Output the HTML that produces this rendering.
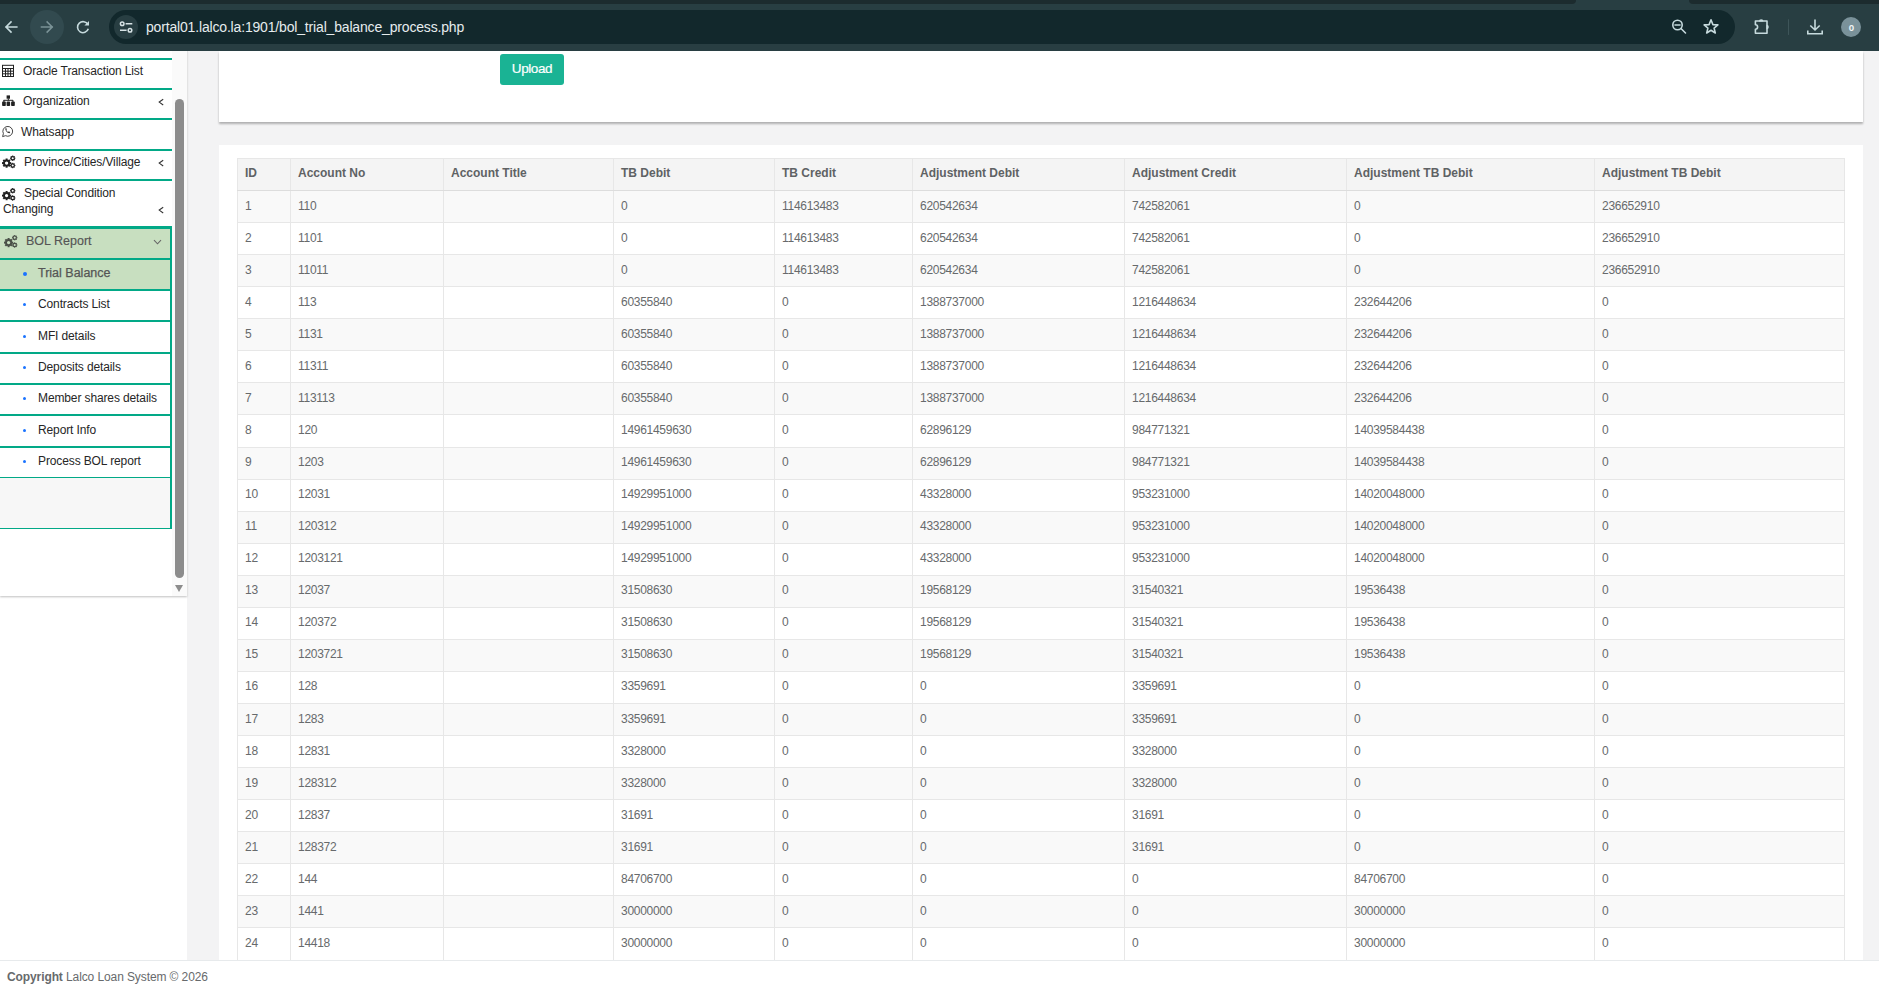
<!DOCTYPE html>
<html><head><meta charset="utf-8">
<style>
*{box-sizing:border-box;margin:0;padding:0}
html,body{width:1879px;height:991px;overflow:hidden;background:#f3f3f4;font-family:"Liberation Sans",sans-serif;font-size:12px;color:#676a6c}
.abs{position:absolute}
/* chrome */
#chrome{position:absolute;left:0;top:0;width:1879px;height:51px;background:#283e42}
#strip1{position:absolute;left:0;top:0;width:1576px;height:4px;background:#1c2b2e;border-radius:0 0 4px 0}
#strip2{position:absolute;left:1689px;top:0;width:190px;height:4px;background:#1c2b2e;border-radius:0 0 0 4px}
#fwdc{position:absolute;left:30px;top:10px;width:34px;height:34px;border-radius:50%;background:#324a4f}
#url{position:absolute;left:109px;top:10px;width:1626px;height:34px;border-radius:17px;background:#12282c}
#tunec{position:absolute;left:114px;top:15px;width:24px;height:24px;border-radius:50%;background:#283e42}
#urltext{position:absolute;left:146px;top:17px;font-size:14px;letter-spacing:-0.17px;color:#e6ecee;white-space:nowrap;line-height:20px}
#avatar{position:absolute;left:1841px;top:17px;width:20px;height:20px;border-radius:50%;background:#7a929a;color:#f2f6f7;font-size:11px;font-weight:bold;text-align:center;line-height:20px}
#sep{position:absolute;left:1787.5px;top:19px;width:1.5px;height:16px;background:#3e5559;border-radius:1px}
/* sidebar */
#side{position:absolute;left:0;top:51px;width:187px;height:909px;background:#fff}
#sidepanel{position:absolute;left:0;top:51px;width:187px;height:545px;background:#fff;box-shadow:0 1px 2px rgba(0,0,0,.25)}
#track{position:absolute;left:172px;top:51px;width:16px;height:545px;background:#fafafa;border-right:1px solid #e3e3e3}
#thumb{position:absolute;left:175px;top:99px;width:9px;height:479px;background:#8c8c8c;border-radius:4.5px}
#arrdn{position:absolute;left:175px;top:585px;width:0;height:0;border-left:4.5px solid transparent;border-right:4.5px solid transparent;border-top:7px solid #8c8c8c}
.si{position:absolute;left:0;width:172px;color:#262626;font-size:12px;letter-spacing:-0.12px;white-space:nowrap}
.tl{position:absolute;height:2px;background:#02a987;left:0;width:172px}
.sub{position:absolute;left:38px;color:#262626;font-size:12px;letter-spacing:-0.12px;white-space:nowrap}
.dot{position:absolute;left:23px;width:4px;height:4px;border-radius:50%;background:#1a73ff}
.chev{position:absolute;left:157px;font-size:12px;color:#333}
/* panels */
#box1{position:absolute;left:219px;top:51px;width:1644px;height:71px;background:#fff;box-shadow:0 2px 2px rgba(0,0,0,.28)}
#btn{position:absolute;left:500px;top:54px;width:64px;height:31px;background:#1ab394;border-radius:3px;color:#fff;font-size:13.5px;text-align:center;line-height:29.5px;letter-spacing:-0.4px;-webkit-text-stroke:0.2px #fff}
#box2{position:absolute;left:219px;top:145px;width:1644px;height:815px;background:#fff}
/* table */
#tbl{position:absolute;left:237px;top:158px;border-collapse:collapse;table-layout:fixed;width:1607px}
#tbl th,#tbl td{border:1px solid #e7e7e7;text-align:left;padding:0 7px 2px;height:32.07px;white-space:nowrap;overflow:hidden}
#tbl th{background:#f4f4f4;font-weight:bold;color:#5f6264;border-bottom:1px solid #dddddd;height:32px;padding-bottom:3px}
#tbl td{letter-spacing:-0.28px}
#tbl tr:nth-child(even) td{background:#f9f9f9}
#tbl tr:nth-child(odd) td{background:#fff}
#footer{position:absolute;left:0;top:960px;width:1879px;height:31px;background:#fff;border-top:1px solid #e7eaec;padding:0 7px;line-height:20px;padding-top:6px;font-size:12px;color:#676a6c;letter-spacing:-0.1px}
</style></head><body>
<div id="chrome">
<div id="strip1"></div><div id="strip2"></div>
<svg class="abs" style="left:0;top:0" width="110" height="51">
 <g fill="none" stroke="#c6dadd" stroke-width="1.6" stroke-linecap="square">
  <path d="M6 27 H16.8 M11 22 L6 27 L11 32"/>
 </g>
</svg>
<div id="fwdc"></div>
<svg class="abs" style="left:0;top:0" width="110" height="51">
 <g fill="none" stroke="#7b9397" stroke-width="1.6" stroke-linecap="square">
  <path d="M41.5 27 H52.2 M47.2 22 L52.2 27 L47.2 32"/>
 </g>
 <g fill="none" stroke="#c6dadd" stroke-width="1.6">
  <path d="M87.9 24.6 A5.5 5.5 0 1 0 88.3 28.8"/>
 </g>
 <path d="M89 21 V25.6 H84.4 Z" fill="#c6dadd"/>
</svg>
<div id="url"></div>
<div id="tunec"></div>
<svg class="abs" style="left:0;top:0" width="150" height="51">
 <g fill="none" stroke="#d6e2e4" stroke-width="1.5">
  <circle cx="122.2" cy="23.7" r="1.8"/>
  <circle cx="130" cy="30.2" r="1.8"/>
  <path d="M125.6 23.7 H132.3 M120 30.2 H126.6"/>
 </g>
</svg>
<div id="urltext">portal01.lalco.la:1901/bol_trial_balance_process.php</div>
<svg class="abs" style="left:1660px;top:0" width="219" height="51">
 <g fill="none" stroke="#c6dadd" stroke-width="1.6">
  <circle cx="17.5" cy="25" r="4.7"/>
  <path d="M15 25 H20 M21 28.5 L25.5 33" stroke-linecap="round"/>
  <path d="M51 19.8 L52.9 24.6 L57.9 24.9 L54.1 28.1 L55.3 33 L51 30.3 L46.7 33 L47.9 28.1 L44.1 24.9 L49.1 24.6 Z" stroke-linejoin="round"/>
  <path d="M95.4 21 H107 V33.3 H95.4 V29.2 A2.2 2.2 0 0 0 95.4 24.8 Z" stroke-linejoin="round"/>
  <path d="M155 19.5 V30 M150.3 25.5 L155 30 L159.7 25.5 M147.8 30.5 V33.8 H162.2 V30.5"/>
 </g>
 <g fill="#c6dadd"><path d="M98.9 21.5 A2.3 2.3 0 0 1 103.5 21.5 Z"/><path d="M106.5 24.7 A2.3 2.3 0 0 1 106.5 29.3 Z"/></g>
</svg>
<div id="sep"></div>
<div id="avatar"><span style="display:inline-block;transform:scaleX(0.8)">o</span></div>
</div>
<div id="side"></div>
<div id="sidepanel"></div>
<!-- borders -->
<div class="tl" style="top:58px"></div>
<div class="tl" style="top:88px"></div>
<div class="tl" style="top:118px"></div>
<div class="tl" style="top:149px"></div>
<div class="tl" style="top:179px"></div>
<!-- BOL report block -->
<div class="abs" style="left:0;top:226px;width:172px;height:64px;background:#c8dfc0"></div>
<div class="tl" style="top:226px;height:3px"></div>
<div class="tl" style="top:258px"></div>
<div class="tl" style="top:289px"></div>
<div class="tl" style="top:320px"></div>
<div class="tl" style="top:352px"></div>
<div class="tl" style="top:383px"></div>
<div class="tl" style="top:414px"></div>
<div class="tl" style="top:446px"></div>
<div class="tl" style="top:477px;height:1px"></div>
<div class="abs" style="left:0;top:478px;width:170px;height:50px;background:#f7f7f7"></div>
<div class="tl" style="top:527.5px;height:1.5px"></div>
<div class="abs" style="left:170px;top:226px;width:2px;height:303px;background:#02a987"></div>
<!-- items -->
<svg class="abs" style="left:0;top:51px" width="30" height="250">
 <!-- calculator/table icon -->
 <g fill="none" stroke="#222" stroke-width="1">
  <rect x="2.5" y="14.3" width="11" height="11.2"/>
  <path d="M2.5 17.5 H13.5 M2.5 20.2 H13.5 M2.5 22.8 H13.5 M5.5 17.5 V25.5 M8 17.5 V25.5 M10.6 17.5 V25.5"/>
 </g>
 <!-- sitemap icon -->
 <g fill="#222">
  <rect x="6.6" y="44.4" width="3.4" height="3.3"/>
  <rect x="7.8" y="47.5" width="1" height="2"/>
  <rect x="3.6" y="48.8" width="9.4" height="1"/>
  <rect x="2.1" y="50.6" width="3.7" height="4.5" rx="0.8"/><rect x="6.6" y="50.6" width="3.5" height="4.5" rx="0.8"/><rect x="11.1" y="50.6" width="3.7" height="4.5" rx="0.8"/>
  <rect x="3.4" y="49" width="1" height="2"/><rect x="12.4" y="49" width="1" height="2"/>
 </g>
 <!-- whatsapp -->
 <g fill="none" stroke="#333" stroke-width="0.9">
  <path d="M2.6 85.6 L3.4 82.6 A4.9 4.9 0 1 1 5.5 84.7 Z"/>
  <path d="M5.3 77.4 C5.1 79.2 6.9 81.8 9.5 82.3 L10.2 81.2 L8.9 80.3 L8.1 80.9 C7.2 80.5 6.6 79.8 6.3 78.9 L6.9 78.2 L6.1 76.9 Z" fill="#333" stroke="none"/>
 </g>
</svg>
<div class="si" style="left:23px;top:57px;line-height:28px">Oracle Transaction List</div>
<div class="si" style="left:23px;top:87px;line-height:28px">Organization</div>
<div class="si" style="left:21px;top:118px;line-height:29px">Whatsapp</div>
<div class="si" style="left:24px;top:148px;line-height:28px">Province/Cities/Village</div>
<div class="si" style="left:24px;top:185px;line-height:16px">Special Condition</div>
<div class="si" style="left:3px;top:201px;line-height:16px">Changing</div>
<div class="si" style="left:26px;top:227.3px;line-height:29px;color:#555;font-size:12.5px;letter-spacing:0px;-webkit-text-stroke:0.15px #555">BOL Report</div>
<svg class="abs" style="left:0;top:0" width="172" height="260" fill="none" stroke="#333" stroke-width="1.1"><path d="M163.2 99.2 L159.2 102.1 L163.2 105"/><path d="M163.2 160.2 L159.2 163.1 L163.2 166"/><path d="M163.2 207.2 L159.2 210.1 L163.2 213"/><path d="M154 240.2 L157.5 243.8 L161 240.2" stroke="#666"/></svg>
<div class="dot" style="top:272px"></div><div class="sub" style="top:259px;line-height:29px;color:#555;font-size:12.5px;letter-spacing:0px;-webkit-text-stroke:0.25px #555">Trial Balance</div>
<div class="dot" style="top:303px;width:3px;height:3px"></div><div class="sub" style="top:290px;line-height:29px">Contracts List</div>
<div class="dot" style="top:335px;width:3px;height:3px"></div><div class="sub" style="top:321px;line-height:30px">MFI details</div>
<div class="dot" style="top:366px;width:3px;height:3px"></div><div class="sub" style="top:353px;line-height:29px">Deposits details</div>
<div class="dot" style="top:397px;width:3px;height:3px"></div><div class="sub" style="top:384px;line-height:29px">Member shares details</div>
<div class="dot" style="top:429px;width:3px;height:3px"></div><div class="sub" style="top:415px;line-height:30px">Report Info</div>
<div class="dot" style="top:460px;width:3px;height:3px"></div><div class="sub" style="top:447px;line-height:29px">Process BOL report</div>
<div id="track"></div>
<div id="thumb"></div>
<div id="arrdn"></div>
<svg class="abs" style="left:0;top:0" width="30" height="260">
 <defs>
  <g id="cogs">
   <g transform="translate(4.6,7.6)">
    <circle r="2.6" fill="none" stroke="#222" stroke-width="1.9"/>
    <g fill="#222">
     <rect x="-1" y="-4.6" width="2" height="2.2"/><rect x="-1" y="2.4" width="2" height="2.2"/>
     <rect x="-4.6" y="-1" width="2.2" height="2"/><rect x="2.4" y="-1" width="2.2" height="2"/>
     <g transform="rotate(45)"><rect x="-1" y="-4.6" width="2" height="2.2"/><rect x="-1" y="2.4" width="2" height="2.2"/><rect x="-4.6" y="-1" width="2.2" height="2"/><rect x="2.4" y="-1" width="2.2" height="2"/></g>
    </g>
   </g>
   <g transform="translate(10.7,2.7)">
    <circle r="1.65" fill="none" stroke="#222" stroke-width="1.15"/>
    <g fill="#222"><rect x="-0.55" y="-2.7" width="1.1" height="1.2"/><rect x="-0.55" y="1.5" width="1.1" height="1.2"/><rect x="-2.7" y="-0.55" width="1.2" height="1.1"/><rect x="1.5" y="-0.55" width="1.2" height="1.1"/><g transform="rotate(45)"><rect x="-0.55" y="-2.7" width="1.1" height="1.2"/><rect x="-0.55" y="1.5" width="1.1" height="1.2"/><rect x="-2.7" y="-0.55" width="1.2" height="1.1"/><rect x="1.5" y="-0.55" width="1.2" height="1.1"/></g></g>
   </g>
   <g transform="translate(10.7,10)">
    <circle r="1.65" fill="none" stroke="#222" stroke-width="1.15"/>
    <g fill="#222"><rect x="-0.55" y="-2.7" width="1.1" height="1.2"/><rect x="-0.55" y="1.5" width="1.1" height="1.2"/><rect x="-2.7" y="-0.55" width="1.2" height="1.1"/><rect x="1.5" y="-0.55" width="1.2" height="1.1"/><g transform="rotate(45)"><rect x="-0.55" y="-2.7" width="1.1" height="1.2"/><rect x="-0.55" y="1.5" width="1.1" height="1.2"/><rect x="-2.7" y="-0.55" width="1.2" height="1.1"/><rect x="1.5" y="-0.55" width="1.2" height="1.1"/></g></g>
   </g>
  </g>
 </defs>
 <use href="#cogs" x="2" y="155.5"/>
 <use href="#cogs" x="2" y="188"/>
 <use href="#cogs" x="4" y="235" style="opacity:.75"/>
</svg>
<div id="box1"></div><div id="btn">Upload</div><div id="box2"></div>
<table id="tbl"><colgroup><col style="width:53px"><col style="width:153px"><col style="width:170px"><col style="width:161px"><col style="width:138px"><col style="width:212px"><col style="width:222px"><col style="width:248px"><col style="width:250px"></colgroup>
<tr><th>ID</th><th>Account No</th><th>Account Title</th><th>TB Debit</th><th>TB Credit</th><th>Adjustment Debit</th><th>Adjustment Credit</th><th>Adjustment TB Debit</th><th>Adjustment TB Debit</th></tr>
<tr><td>1</td><td>110</td><td></td><td>0</td><td>114613483</td><td>620542634</td><td>742582061</td><td>0</td><td>236652910</td></tr>
<tr><td>2</td><td>1101</td><td></td><td>0</td><td>114613483</td><td>620542634</td><td>742582061</td><td>0</td><td>236652910</td></tr>
<tr><td>3</td><td>11011</td><td></td><td>0</td><td>114613483</td><td>620542634</td><td>742582061</td><td>0</td><td>236652910</td></tr>
<tr><td>4</td><td>113</td><td></td><td>60355840</td><td>0</td><td>1388737000</td><td>1216448634</td><td>232644206</td><td>0</td></tr>
<tr><td>5</td><td>1131</td><td></td><td>60355840</td><td>0</td><td>1388737000</td><td>1216448634</td><td>232644206</td><td>0</td></tr>
<tr><td>6</td><td>11311</td><td></td><td>60355840</td><td>0</td><td>1388737000</td><td>1216448634</td><td>232644206</td><td>0</td></tr>
<tr><td>7</td><td>113113</td><td></td><td>60355840</td><td>0</td><td>1388737000</td><td>1216448634</td><td>232644206</td><td>0</td></tr>
<tr><td>8</td><td>120</td><td></td><td>14961459630</td><td>0</td><td>62896129</td><td>984771321</td><td>14039584438</td><td>0</td></tr>
<tr><td>9</td><td>1203</td><td></td><td>14961459630</td><td>0</td><td>62896129</td><td>984771321</td><td>14039584438</td><td>0</td></tr>
<tr><td>10</td><td>12031</td><td></td><td>14929951000</td><td>0</td><td>43328000</td><td>953231000</td><td>14020048000</td><td>0</td></tr>
<tr><td>11</td><td>120312</td><td></td><td>14929951000</td><td>0</td><td>43328000</td><td>953231000</td><td>14020048000</td><td>0</td></tr>
<tr><td>12</td><td>1203121</td><td></td><td>14929951000</td><td>0</td><td>43328000</td><td>953231000</td><td>14020048000</td><td>0</td></tr>
<tr><td>13</td><td>12037</td><td></td><td>31508630</td><td>0</td><td>19568129</td><td>31540321</td><td>19536438</td><td>0</td></tr>
<tr><td>14</td><td>120372</td><td></td><td>31508630</td><td>0</td><td>19568129</td><td>31540321</td><td>19536438</td><td>0</td></tr>
<tr><td>15</td><td>1203721</td><td></td><td>31508630</td><td>0</td><td>19568129</td><td>31540321</td><td>19536438</td><td>0</td></tr>
<tr><td>16</td><td>128</td><td></td><td>3359691</td><td>0</td><td>0</td><td>3359691</td><td>0</td><td>0</td></tr>
<tr><td>17</td><td>1283</td><td></td><td>3359691</td><td>0</td><td>0</td><td>3359691</td><td>0</td><td>0</td></tr>
<tr><td>18</td><td>12831</td><td></td><td>3328000</td><td>0</td><td>0</td><td>3328000</td><td>0</td><td>0</td></tr>
<tr><td>19</td><td>128312</td><td></td><td>3328000</td><td>0</td><td>0</td><td>3328000</td><td>0</td><td>0</td></tr>
<tr><td>20</td><td>12837</td><td></td><td>31691</td><td>0</td><td>0</td><td>31691</td><td>0</td><td>0</td></tr>
<tr><td>21</td><td>128372</td><td></td><td>31691</td><td>0</td><td>0</td><td>31691</td><td>0</td><td>0</td></tr>
<tr><td>22</td><td>144</td><td></td><td>84706700</td><td>0</td><td>0</td><td>0</td><td>84706700</td><td>0</td></tr>
<tr><td>23</td><td>1441</td><td></td><td>30000000</td><td>0</td><td>0</td><td>0</td><td>30000000</td><td>0</td></tr>
<tr><td>24</td><td>14418</td><td></td><td>30000000</td><td>0</td><td>0</td><td>0</td><td>30000000</td><td>0</td></tr>
</table>
<div id="footer"><b>Copyright</b> Lalco Loan System &copy; 2026</div>
</body></html>
